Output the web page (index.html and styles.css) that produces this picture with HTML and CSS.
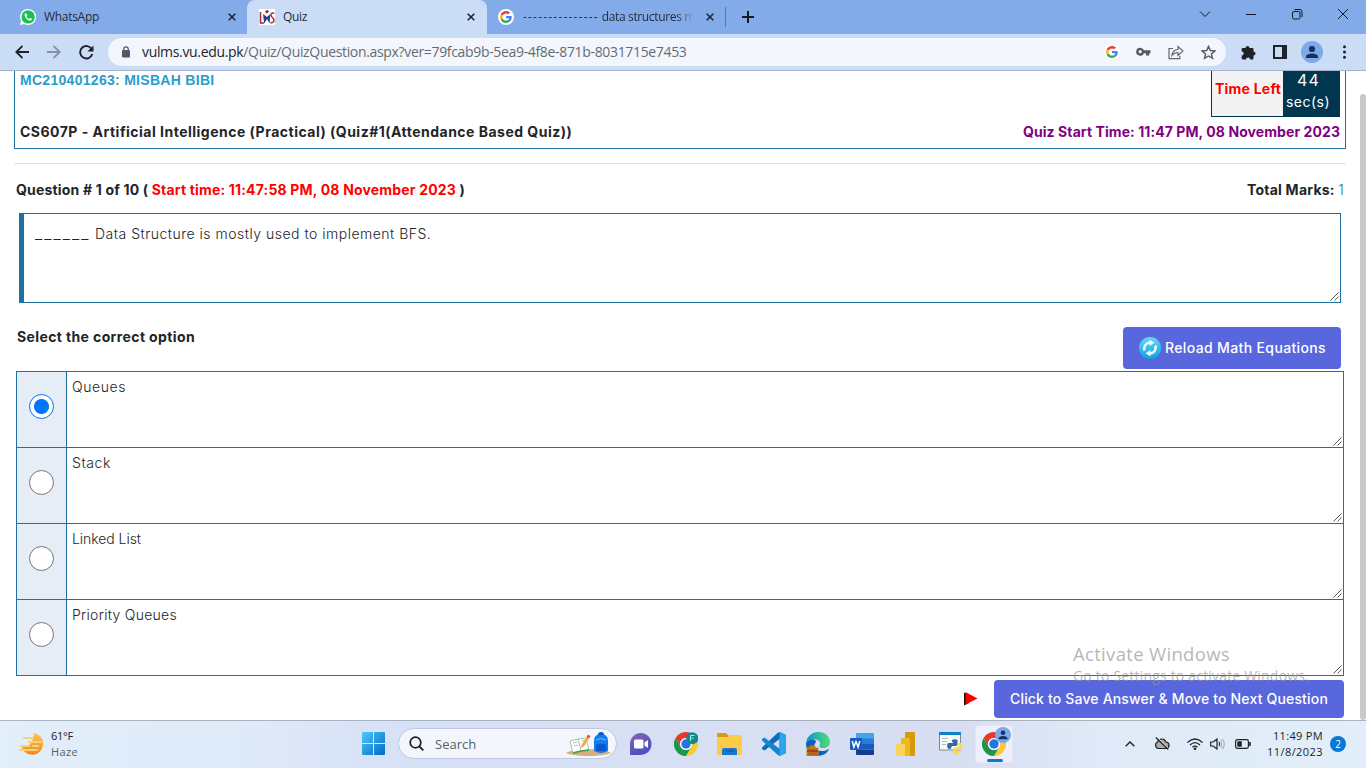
FILE: index.html
```html
<!DOCTYPE html>
<html lang="en">
<head>
<meta charset="utf-8">
<title>Quiz</title>
<link rel="stylesheet" href="styles.css">
</head>
<body>
<svg class="defs" width="0" height="0">
  <symbol id="chrome" viewBox="0 0 24 24"><path fill="#e33b2e" d="M1.6 6A12 12 0 0 1 22.4 6H12A6 6 0 0 0 6.8 15Z"/><path fill="#fcc934" d="M22.4 6A12 12 0 0 1 12 24L17.2 15A6 6 0 0 0 12 6Z"/><path fill="#1e9648" d="M12 24A12 12 0 0 1 1.6 6L6.8 15A6 6 0 0 0 17.2 15Z"/><circle cx="12" cy="12" r="5.9" fill="#fff"/><circle cx="12" cy="12" r="4.7" fill="#2474e8"/></symbol>
  <symbol id="google" viewBox="0 0 48 48"><path fill="#EA4335" d="M24 9.5c3.54 0 6.71 1.22 9.21 3.6l6.85-6.85C35.9 2.38 30.47 0 24 0 14.62 0 6.51 5.38 2.56 13.22l7.98 6.19C12.43 13.72 17.74 9.5 24 9.5z"/><path fill="#4285F4" d="M46.98 24.55c0-1.57-.15-3.09-.38-4.55H24v9.02h12.94c-.58 2.96-2.26 5.48-4.78 7.18l7.73 6c4.51-4.18 7.09-10.36 7.09-17.65z"/><path fill="#FBBC05" d="M10.53 28.59c-.48-1.45-.76-2.99-.76-4.59s.27-3.14.76-4.59l-7.98-6.19C.92 16.46 0 20.12 0 24c0 3.88.92 7.54 2.56 10.78l7.97-6.19z"/><path fill="#34A853" d="M24 48c6.48 0 11.93-2.13 15.89-5.81l-7.73-6c-2.15 1.45-4.92 2.3-8.16 2.3-6.26 0-11.57-4.22-13.47-9.91l-7.98 6.19C6.51 42.62 14.62 48 24 48z"/></symbol>
  <symbol id="close" viewBox="0 0 8 8"><path d="M.7.7 7.3 7.3M7.3.7.7 7.3" stroke="#1f2530" stroke-width="1.6"/></symbol>
  <symbol id="person" viewBox="0 0 22 22"><circle cx="11" cy="11" r="11" fill="#7fa8e8"/><circle cx="11" cy="8" r="3.1" fill="#123261"/><path d="M5 17v-1.6c0-2 3.6-3 6-3s6 1 6 3V17z" fill="#123261"/></symbol>
</svg>

<header class="tabstrip">
  <div class="tab tab-first">
    <svg class="favicon" viewBox="0 0 16 16"><path d="M0 16 1.1 11.9A8 8 0 1 1 4.200 15z" fill="#fff"/><circle cx="8.100" cy="7.900" r="6.700" fill="#19c14f"/><path d="M5.500 4.200c-1.600 1-.8 3.400.8 5.200 1.700 1.900 4.300 3 5.400 1.400.5-.8 0-1.100-1.400-1.700-.6-.2-.9.900-1.300.8-1-.3-2-1.300-2.300-2.200-.1-.4.8-.7.600-1.200-.5-1.500-.9-2.600-1.800-2.300z" fill="#fff"/></svg>
    <span class="tab-title t-wa">WhatsApp</span>
    <svg class="x" width="8" height="8"><use href="#close"/></svg>
  </div>
  <div class="tab tab-active">
    <svg class="favicon" viewBox="0 0 16 16"><path d="M0 0h16v16H0z" fill="#fff"/><path d="M1.500 3v11H5" stroke="#a52a2a" stroke-width="1.500" fill="none"/><path d="M15.300 4.500c-3-2-4.300 1.500-2.300 3.500 3 2.500 2.500 6.500-1.500 5.500" stroke="#a52a2a" stroke-width="1.500" fill="none"/><path d="M4 5 5.200 14.500 8 10l2.500 4.500L11.300 5 8 8z" fill="#2a3b8c"/><circle cx="8" cy="2.600" r="1.700" fill="#b02a35"/></svg>
    <span class="tab-title t-quiz">Quiz</span>
    <svg class="x" width="8" height="8"><use href="#close"/></svg>
  </div>
  <div class="tab tab-last">
    <span class="g-disc"><svg width="12" height="12"><use href="#google"/></svg></span>
    <span class="tab-title tab-fade"><span class="dashes">---------------</span> data structures m</span>
    <svg class="x" width="8" height="8"><use href="#close"/></svg>
  </div>
  <span class="tab-divider"></span>
  <svg class="plus" width="12" height="12" viewBox="0 0 12 12"><path d="M6 0v12M0 6h12" stroke="#16191f" stroke-width="2"/></svg>
  <div class="win-buttons">
    <svg width="12" height="12" viewBox="0 0 12 12"><path d="m1 3.500 5 5 5-5" /></svg>
    <svg width="12" height="12" viewBox="0 0 12 12"><path d="M1 6.500h10"/></svg>
    <svg width="12" height="12" viewBox="0 0 12 12"><rect x="1.500" y="3.500" width="7.500" height="7.500" rx="1.500"/><path d="M3.500 1.500H9a2 2 0 0 1 2 2V9"/></svg>
    <svg width="12" height="12" viewBox="0 0 12 12"><path d="m1 1 10 10M11 1 1 11"/></svg>
  </div>
</header>

<nav class="toolbar">
  <svg class="nav-icon" width="14" height="14" viewBox="0 0 14 14"><path d="M14 7H1.500M7.500.8 1.300 7l6.200 6.200" stroke="#1f2329" stroke-width="1.900" fill="none"/></svg>
  <svg class="nav-icon" width="14" height="14" viewBox="0 0 14 14"><path d="M0 7h12.500M6.500.8 12.700 7l-6.200 6.200" stroke="#8791a4" stroke-width="1.900" fill="none"/></svg>
  <svg class="nav-icon" width="15" height="15" viewBox="0 0 15 15"><path d="M12.800 4.300A6.200 6.200 0 1 0 13.300 9" stroke="#1f2329" stroke-width="1.900" fill="none"/><path d="M14.500.5v6H8.500z" fill="#1f2329"/></svg>
  <div class="omnibox">
    <svg width="8" height="12" viewBox="0 0 8 12"><rect y="4" width="8" height="7.500" rx="1" fill="#55595f"/><path d="M1.800 5V3a2.200 2.200 0 0 1 4.400 0v2" fill="none" stroke="#55595f" stroke-width="1.200"/></svg>
    <span class="url"><span class="host">vulms.vu.edu.pk</span>/Quiz/QuizQuestion.aspx?ver=79fcab9b-5ea9-4f8e-871b-8031715e7453</span>
    <div class="omni-actions">
      <span class="g-disc"><svg width="12" height="12"><use href="#google"/></svg></span>
      <svg width="15" height="10" viewBox="0 0 15 10"><path fill="#55595f" fill-rule="evenodd" d="M4.200.7a4 4 0 1 0 3.700 5.500H10V8.500h3.200V6.200H14.500V3.300H7.900A4 4 0 0 0 4.200.7zm0 2.400a1.600 1.600 0 1 1 0 3.200 1.600 1.600 0 0 1 0-3.200z"/></svg>
      <svg width="16" height="15" viewBox="0 0 16 15" fill="none" stroke="#62676e" stroke-width="1.200"><path d="M5 3.500H1v10.200h10.800v-3"/><path d="M4 10.500C4.300 7 6.500 4.700 10 4.500V1.500L15 6l-5 4.500v-3C7.500 7.500 5.500 8.500 4 10.500z"/></svg>
      <svg width="15" height="15" viewBox="0 0 15 15"><path d="m7.500 1.300 1.800 4.200 4.600.4-3.500 3 1.100 4.500-4-2.400-4 2.400 1.100-4.500-3.500-3 4.600-.4z" fill="none" stroke="#55595f" stroke-width="1.400"/></svg>
    </div>
  </div>
  <div class="tool-actions">
    <svg width="15" height="15" viewBox="0 0 15 15"><path fill="#1f2329" d="M4.500 3a2 2 0 0 1 4 0h2.800a1.200 1.200 0 0 1 1.200 1.200v2.300a2 2 0 0 1 0 4v2.800c0 .8-.5 1.200-1.200 1.200H9.200a2 2 0 0 0-4.200 0H1.900C1.100 14.500.7 14 .7 13.300v-2.700a2 2 0 0 0 0-4V4.200C.7 3.500 1.100 3 1.900 3z"/></svg>
    <svg width="14" height="14" viewBox="0 0 14 14"><path d="M1 1h12v12H1z" fill="none" stroke="#1f2329" stroke-width="2"/><path d="M9 0h5v14H9z" fill="#1f2329"/></svg>
    <svg width="22" height="22"><use href="#person"/></svg>
    <svg class="kebab" width="3" height="14" viewBox="0 0 3 14" fill="#1f2329"><circle cx="1.500" cy="1.800" r="1.500"/><circle cx="1.500" cy="7" r="1.500"/><circle cx="1.500" cy="12.200" r="1.500"/></svg>
  </div>
</nav>

<main class="page">
  <section class="quiz-head">
    <div class="head-top">
      <span class="student">MC210401263: MISBAH BIBI</span>
      <div class="timer">
        <span class="timer-label">Time Left</span>
        <span class="timer-value"><span class="seconds">44</span><span class="unit">sec(s)</span></span>
      </div>
    </div>
    <div class="head-bottom">
      <span class="course">CS607P - Artificial Intelligence (Practical) (Quiz#1(Attendance Based Quiz))</span>
      <span class="started">Quiz Start Time: 11:47 PM, 08 November 2023</span>
    </div>
  </section>
  <hr class="rule">
  <div class="question-bar">
    <span class="q-number">Question # 1 of 10 ( <span class="red">Start time: 11:47:58 PM, 08 November 2023</span> )</span>
    <span class="total">Total Marks: <span class="marks">1</span></span>
  </div>
  <div class="question-box"><span class="q-text"><span class="blank">______</span> Data Structure is mostly used to implement BFS.</span><svg class="grip" viewBox="0 0 9 9"><path d="M.5 8.500l8-8M4.500 8.500l4-4"/></svg></div>
  <div class="select-bar">
    <span class="select-title">Select the correct option</span>
    <button class="btn reload">
      <svg width="22" height="22" viewBox="0 0 22 22"><defs><linearGradient id="rg" x2="0" y2="1"><stop stop-color="#68d8f5"/><stop offset="1" stop-color="#08a5df"/></linearGradient></defs><circle cx="11" cy="11" r="11" fill="url(#rg)"/><path d="M5.600 13.500A6 6 0 0 1 11 5.500M16.400 8.500A6 6 0 0 1 11 16.500" fill="none" stroke="#eefaff" stroke-width="2.600"/><path d="m10.500 2.500 5 3.300-5 3.200zM11.500 19.500l-5-3.300 5-3.200z" fill="#eefaff"/></svg>
      <span>Reload Math Equations</span>
    </button>
  </div>
  <div class="options">
    <div class="option"><span class="pick"><span class="radio checked"></span></span><div class="answer"><span class="t-o1">Queues</span><svg class="grip" viewBox="0 0 9 9"><path d="M.5 8.500l8-8M4.500 8.500l4-4"/></svg></div></div>
    <div class="option"><span class="pick"><span class="radio"></span></span><div class="answer"><span class="t-o2">Stack</span><svg class="grip" viewBox="0 0 9 9"><path d="M.5 8.500l8-8M4.500 8.500l4-4"/></svg></div></div>
    <div class="option"><span class="pick"><span class="radio"></span></span><div class="answer"><span class="t-o3">Linked List</span><svg class="grip" viewBox="0 0 9 9"><path d="M.5 8.500l8-8M4.500 8.500l4-4"/></svg></div></div>
    <div class="option"><span class="pick"><span class="radio"></span></span><div class="answer"><span class="t-o4">Priority Queues</span><svg class="grip" viewBox="0 0 9 9"><path d="M.5 8.500l8-8M4.500 8.500l4-4"/></svg></div></div>
  </div>
  <div class="submit-bar">
    <svg width="14" height="14" viewBox="0 0 14 14"><path d="M0 .5v13L5 11V3z" fill="#111"/><path d="M1.500 0v12.500L13.500 6.500z" fill="#f00"/></svg>
    <button class="btn save"><span>Click to Save Answer &amp; Move to Next Question</span></button>
  </div>
  <span class="scroll-thumb"></span>
  <div class="watermark"><span class="wm-1">Activate Windows</span><span class="wm-2">Go to Settings to activate Windows.</span></div>
</main>

<footer class="taskbar">
  <div class="weather">
    <svg width="24" height="24" viewBox="0 0 24 24"><defs><linearGradient id="sun" x2="0" y2="1"><stop stop-color="#ffc34a"/><stop offset="1" stop-color="#f5861f"/></linearGradient></defs><path d="M15 1a11 11 0 1 1-12.500 14C8 16 14 13 15 1z" fill="url(#sun)"/><path d="M4 6h10M9 10h14M1 14h10M13 14h7M0 18h19" stroke="#f3d27c" stroke-width="2"/></svg>
    <div class="stack"><span class="temp">61°F</span><span class="dim">Haze</span></div>
  </div>
  <div class="apps">
    <svg class="start" width="23" height="23" viewBox="0 0 23 23"><defs><linearGradient id="win" x2="1" y2="1"><stop stop-color="#4ccaf8"/><stop offset="1" stop-color="#0469c9"/></linearGradient></defs><path fill="url(#win)" d="M0 1q0-1 1-1h10v11H0zM12 0h10q1 0 1 1v10H12zM0 12h11v11H1q-1 0-1-1zM12 12h11v10q0 1-1 1H12z"/></svg>
    <div class="search">
      <svg width="15" height="15" viewBox="0 0 15 15"><circle cx="6.500" cy="6.500" r="5.300" fill="none" stroke="#1d1d1f" stroke-width="1.700"/><path d="m10.300 10.300 4 4" stroke="#1d1d1f" stroke-width="1.900"/></svg>
      <span class="search-text">Search</span>
      <svg class="doodle" width="45" height="24" viewBox="0 0 45 24"><path d="M0 21c9-5 36-5 45 0-8 4-37 4-45 0z" fill="#d9ad7b"/><path d="m4 9 8-2 8-1 3 12-8 1-8 2z" fill="#fff" stroke="#8db59a" stroke-width=".8"/><path d="m7 21 8-2 8-1" stroke="#3f9c4a" stroke-width="1.600" fill="none"/><path d="m12 7 3 12M7 11l4-1m-3 4 4-1m4-4 3-.500m-2 4 3-.500" stroke="#a6b4b2" stroke-width=".9"/><path d="m15 14 5.500-9 2.500 1.600-5.500 8.200-2.500 1z" fill="#f5a742"/><path d="m20.500 5 1.500-2.500 2.500 1.600L23 6.600z" fill="#e64d44"/><path d="M28 19V9q0-7 7-7t7 7v10q-7 4-14 0z" fill="#137bed"/><path d="M32 3q0-3 3-3t3 3M30 12h10v7H30z" fill="#0757cd"/><path d="M30 8q5-3 10 0" stroke="#66bdff" fill="none"/></svg>
    </div>
    <svg class="a-chat" width="24" height="24" viewBox="0 0 24 24"><defs><linearGradient id="chat" x2=".5" y2="1"><stop stop-color="#8a63b0"/><stop offset="1" stop-color="#4b50c4"/></linearGradient></defs><path fill="url(#chat)" d="M12 1a11 11 0 1 1-1 22H1V12A11 11 0 0 1 12 1z"/><rect x="5" y="7.500" width="9.500" height="9" rx="1.500" fill="#fff"/><path d="m15.500 10.500 3.500-2.500v8l-3.500-2.500z" fill="#fff"/></svg>
    <svg class="a-chrome" width="24" height="24" viewBox="0 0 24 24"><use href="#chrome"/><circle cx="18.300" cy="6.200" r="6" fill="#0c8c8c"/><path d="M16.500 9V3.500h4M16.500 6.200h3" stroke="#b8e4e2" fill="none"/></svg>
    <svg class="a-files" width="25" height="22" viewBox="0 0 25 22"><path d="M0 1q0-1 1-1h8l3 3h11v8H0z" fill="#d89a13"/><path d="M0 4h11l2-2h11q1 0 1 1v19H0z" fill="#fccb4a"/><path d="M5 22v-5q0-2 2-2h11q2 0 2 2v5z" fill="#1677ce"/><path d="M9 18h8" stroke="#0b4f91"/></svg>
    <svg class="a-code" width="24" height="24" viewBox="0 0 24 24"><path fill="#0870b8" fill-rule="evenodd" d="M17.500 0 24 3v18l-6.500 3L7.500 14.800 2.500 18.500 0 17V15.500L15.500 1zM17.500 7v10L11 12z"/><path d="M17.500 7 11 12l-3.500 2.800L0 8.500V7l2.500-1.500z" fill="none"/><path d="M2.500 5.500 0 7v1.500l14.500 13.200 3 2.300V17z" fill="#1685d1"/><path d="M17.500 0v24l6.500-3V3z" fill="#2aa5ee"/></svg>
    <svg class="a-edge" width="24" height="24" viewBox="0 0 24 24"><defs><linearGradient id="edge"><stop stop-color="#1890da"/><stop offset="1" stop-color="#4de06e"/></linearGradient></defs><path d="M12 0c8 0 12 5 12 10 0 4-3 6-7 6-4 0-4-2-3-4 1-4-7-7-14-1C1 4 6 0 12 0z" fill="url(#edge)"/><path d="M0 11C4 6 10 7 10 10c-4 4 0 10 7 9 3 0 5-2 6-2-2 5-7 7-12 7C4 24 0 18 0 11z" fill="#1260b5"/><path d="M1 16h11v8H1zM4 16v-2h5v2" fill="#b66518" stroke="#d08528"/><path d="M1 19h11" stroke="#653710"/></svg>
    <svg class="a-word" width="24" height="22" viewBox="0 0 24 22"><path d="M6 1q0-1 1-1h16q1 0 1 1v5H6z" fill="#41a5ee"/><path d="M6 5.500h18V11H6z" fill="#2b7cd3"/><path d="M6 11h18v5.500H6z" fill="#185abd"/><path d="M6 16.500h18V21q0 1-1 1H7q-1 0-1-1z" fill="#103f91"/><rect y="5" width="12" height="12" rx="1" fill="#185abd"/><path d="m2.200 8 1.700 6L6 8.500 8.100 14l1.700-6" stroke="#fff" stroke-width="1.500" fill="none"/></svg>
    <svg class="a-bi" width="20" height="24" viewBox="0 0 20 24"><path d="M9 1q0-1 1-1h8q1 0 1 1v22q0 1-1 1H9z" fill="#d49a0c"/><path d="M5 7q0-1 1-1h7q1 0 1 1v17H5z" fill="#edb91f"/><path d="M0 13q0-1 1-1h7q1 0 1 1v11H1q-1 0-1-1z" fill="#fbd25c"/></svg>
    <svg class="a-py" width="23" height="23" viewBox="0 0 23 23"><path d="M.5 1.500h21V18H.5z" fill="#f5f7f8" stroke="#7c8995"/><path d="M0 0h22v3H0z" fill="#1180ca"/><path d="M3 6.500h6M3 9.500h5M3 12.500h4" stroke="#b3bbc0"/><path d="M13 8q3-1.500 5.500 0v5l-1 1H13l-1.500 3H9.500q-2.500-3-.5-6h5v-1h-1z" fill="#2f6d9e"/><path d="M19.500 11H22q2.500 4-.5 7H17v.8h3V21q-3 2.500-6 .5V17l1-1.500h3.500l1-1.500z" fill="#fad849"/></svg>
    <div class="active-app"><svg width="26" height="26" viewBox="0 0 26 26"><use href="#chrome" y="2" width="24" height="24"/></svg><svg class="badge" width="16" height="16" viewBox="0 0 22 22"><use href="#person"/></svg></div>
  </div>
  <div class="tray">
    <svg width="10" height="6" viewBox="0 0 10 6"><path d="m.7 5.300 4.300-4.300 4.300 4.300" fill="none" stroke="#222" stroke-width="1.400"/></svg>
    <svg class="y-cloud" width="16" height="13" viewBox="0 0 16 13"><path d="M4 11.500a3.500 3.500 0 0 1-.5-6.500 4.500 4.500 0 0 1 8.500 0 3.300 3.300 0 0 1 .5 6.500z" fill="#aaa" stroke="#222" stroke-width="1.200"/><path d="m3 .5 12 12" stroke="#e4eefa" stroke-width="1.200"/><path d="m1.800.5 12.500 12" stroke="#222" stroke-width="1.300"/></svg>
    <svg class="y-wifi" width="16" height="12" viewBox="0 0 16 12" fill="none" stroke="#222" stroke-width="1.200"><path d="M.5 4.500q7.500-7 15 0M3 7q5-4.700 10 0M5.500 9.300q2.500-2.200 5 0"/><circle cx="8" cy="10.800" r=".7" fill="#222"/></svg>
    <svg class="y-vol" width="15" height="12" viewBox="0 0 15 12" fill="none" stroke="#222" stroke-width="1.200"><path d="M.7 4v4h2.500L7 11V1L3.200 4z"/><path d="M9 4q1.300 2 0 4"/><path d="M10.500 2.300q2.500 3.700 0 7.400M12.300.8q4 5.200 0 10.400" stroke="#aab2bb"/></svg>
    <svg class="y-bat" width="16" height="10" viewBox="0 0 16 10"><rect x=".6" y=".6" width="12.800" height="8.800" rx="1.800" fill="none" stroke="#222" stroke-width="1.200"/><path d="M2.300 2.300h4.500v5.400H2.300z" fill="#222"/><path d="M15 3v4" stroke="#222" stroke-width="1.600"/></svg>
    <div class="clock"><span class="time">11:49 PM</span><span class="date">11/8/2023</span></div>
    <span class="notice">2</span>
  </div>
</footer>
</body>
</html>
```
FILE: styles.css
```css
* { box-sizing: border-box; }
html, body { margin: 0; width: 1366px; height: 768px; overflow: hidden; }
body { display: flex; flex-direction: column; font-family: Inter, "Open Sans", sans-serif; font-size: 14px; color: #212529; background: #fff; }
svg { display: block; flex: none; }
span { white-space: nowrap; }
.defs { position: absolute; }

/* Browser tabs */
.tabstrip { height: 34px; flex: none; display: flex; align-items: center; background: #84abe9; font: 12px "Open Sans", "Noto Sans", sans-serif; color: #262c38; }
.tab { height: 34px; display: flex; align-items: center; flex: none; }
.tab-first { width: 247px; padding: 0 11px 0 20px; }
.tab-active { width: 240px; padding: 0 12px; background: #cbdcf6; border-radius: 8px 8px 0 0; }
.tab-last { width: 238px; padding: 0 11px 0 11px; }
.favicon { width: 16px; height: 16px; margin-right: 8px; }
.tab-title { margin-right: auto; line-height: 16px; }
.t-wa { letter-spacing: -.297px; }
.t-quiz { letter-spacing: -.34px; }
.tab-fade { width: 171px; overflow: hidden; letter-spacing: -.35px; -webkit-mask-image: linear-gradient(90deg, #000 90%, transparent); mask-image: linear-gradient(90deg, #000 90%, transparent); }
.dashes { letter-spacing: 1.200px; }
.tab-last .g-disc { margin-right: 9px; }
.g-disc { width: 16px; height: 16px; border-radius: 50%; background: #fff; display: flex; align-items: center; justify-content: center; flex: none; }
.x { width: 8px; height: 8px; }
.tab-divider { width: 1px; height: 20px; background: #5878a8; }
.plus { margin-left: 16px; }
.win-buttons { margin: -6px 17px 0 auto; display: flex; gap: 34px; fill: none; stroke: #14181f; stroke-width: 1; }

/* Address bar */
.toolbar { height: 37px; flex: none; display: flex; align-items: center; padding: 0 20px 0 15px; background: #cbdcf6; border-bottom: 1px solid #a6b3cb; }
.nav-icon { margin-right: 18px; }
.nav-icon:nth-child(3) { margin-right: 14px; }
.omnibox { width: 1118px; height: 28px; border-radius: 14px; background: #f3f7fd; display: flex; align-items: center; padding: 0 10px 0 14px; flex: none; font: 14px "Open Sans", "Noto Sans", sans-serif; color: #666b72; }
.url { margin: -1px 0 0 12px; letter-spacing: -.335px; }
.host { color: #1f2329; }
.omni-actions { margin-left: auto; display: flex; align-items: center; gap: 17px; }
.omni-actions .g-disc { margin-right: -1px; }
.tool-actions { margin-left: auto; display: flex; align-items: center; gap: 15px; }
.tool-actions svg:nth-child(2) { margin-left: 2px; margin-right: -1px; }
.tool-actions .kebab { margin-left: 5px; }

/* Quiz page */
.page { position: relative; flex: 1; padding: 0 20px 0 14px; overflow: hidden; }
.quiz-head { height: 78px; border: 1px solid #1f72a0; border-top: 0; padding: 0 5px; display: flex; flex-direction: column; }
.head-top { height: 46px; display: flex; justify-content: space-between; }
.student { font: bold 14px/18px "Liberation Sans", Arial, sans-serif; color: #2b9dcc; letter-spacing: .29px; }
.timer { display: flex; width: 129px; height: 46px; border: 1px solid #003650; border-top: 0; }
.timer-label { width: 71px; background: #f3f3f3; color: #f00; font-weight: 700; padding: 9px 0 0 3px; line-height: 18px; letter-spacing: .224px; }
.timer-value { flex: 1; background: #003650; color: #fff; display: flex; flex-direction: column; align-items: flex-start; padding-left: 3px; }
.seconds { font-size: 16px; line-height: 18px; margin: 0 0 2px 11px; letter-spacing: 1.100px; }
.unit { line-height: 22px; letter-spacing: .474px; }
.head-bottom { display: flex; justify-content: space-between; font-weight: 700; line-height: 30px; }
.course { letter-spacing: .49px; }
.started { color: #800080; letter-spacing: .078px; }
.rule { height: 1px; border: 0; background: #e1e1e1; margin: 14px 0 0; }
.question-bar { height: 49px; display: flex; justify-content: space-between; padding: 0 2px; font-weight: 700; line-height: 52px; }
.q-number { letter-spacing: .18px; }
.total { letter-spacing: .225px; }
.red { color: #f00; }
.marks { color: #2573a0; font-weight: 300; }
.question-box { position: relative; height: 90px; margin: 0 5px; border: 1px solid #1f72a0; border-left-width: 5px; padding: 11px; font-weight: 300; line-height: 18px; }
.q-text { letter-spacing: .5px; }
.blank { font-size: 16px; line-height: 16px; letter-spacing: 2.100px; }
.grip { position: absolute; right: 1px; bottom: 1px; width: 9px; height: 9px; fill: none; stroke: #444; stroke-width: .9; }
.select-bar { height: 68px; display: flex; justify-content: space-between; align-items: flex-end; padding: 0 5px 2px 3px; font-weight: 700; }
.select-title { line-height: 18px; margin-bottom: 23px; letter-spacing: .38px; }
.btn { border: 0; border-radius: 4px; background: #5867dd; color: #fff; font: 500 14px Inter, sans-serif; display: flex; align-items: center; padding: 0 16px; }
.btn span { margin-top: -2px; }
.reload { width: 218px; height: 42px; gap: 4px; padding: 0 15px 0 16px; letter-spacing: .362px; }
.options { margin: 0 2px; border: 1px solid #1f72a0; border-bottom: 0; }
.option { display: flex; height: 76px; border-bottom: 1px solid #1f72a0; }
.pick { width: 50px; background: #e6edf7; border-right: 1px solid #1f72a0; display: flex; justify-content: center; padding-top: 22px; }
.radio { width: 25px; height: 25px; border-radius: 50%; border: 1px solid #767676; background: #fff; }
.radio.checked { border-color: #0075ff; background: radial-gradient(circle, #0075ff 7px, #fff 8px); }
.answer { position: relative; flex: 1; padding: 6px 5px; font-weight: 300; line-height: 18px; }
.t-o1 { letter-spacing: .57px; }
.t-o2 { letter-spacing: .594px; }
.t-o3 { letter-spacing: -.05px; }
.t-o4 { letter-spacing: .284px; }
.submit-bar { height: 42px; display: flex; justify-content: flex-end; align-items: center; gap: 16px; padding: 4px 2px 0 0; }
.save { width: 350px; height: 38px; letter-spacing: .17px; }
.scroll-thumb { position: absolute; right: 0; top: 23px; width: 6px; height: 626px; border-radius: 3px; background: #c9c9c9; }
.watermark { position: absolute; left: 1073px; top: 571px; display: flex; flex-direction: column; align-items: flex-start; color: rgba(150,150,150,.7); font-family: "Open Sans", sans-serif; }
.wm-1 { font-size: 18.500px; line-height: 24px; letter-spacing: .322px; }
.wm-2 { font-size: 14px; line-height: 20px; letter-spacing: .189px; }

/* Taskbar */
.taskbar { height: 48px; flex: none; border-top: 1px solid #a9b3bf; padding-bottom: 2px; background: linear-gradient(90deg, #e2eefa 0, #dfeaf9 18%, #d6e0f7 30%, #d8dff3 55%, #d7def1 70%, #dfe9f7 80%, #e2eefa 100%); display: flex; align-items: center; font-family: "Open Sans", sans-serif; font-size: 11px; color: #1e2126; }
.weather { width: 361px; padding-left: 19px; display: flex; gap: 8px; align-items: center; }
.stack { display: flex; flex-direction: column; align-items: flex-start; line-height: 16px; }
.temp { letter-spacing: -.242px; }
.dim { color: #5a6068; letter-spacing: .359px; }
.apps { display: flex; align-items: center; height: 45px; }
.start { margin: 0 13px 0 1px; }
.search { width: 219px; height: 31px; border: 1px solid #bdc9df; border-radius: 16px; background: #f3f6fd; display: flex; align-items: center; padding: 0 5px 0 10px; font-size: 13px; color: #5b5f66; }
.search-text { margin-left: 11px; }
.doodle { margin-left: auto; }
.a-chat { margin-left: 12px; }
.a-chrome, .a-edge { margin-left: 20px; }
.a-chrome { margin-left: 21px; }
.a-files { margin-left: 19px; }
.a-code { margin-left: 20px; }
.a-word { margin-left: 20px; }
.a-bi { margin-left: 22px; }
.a-py { margin-left: 23px; }
.active-app { position: relative; margin-left: 13px; width: 38px; height: 38px; border-radius: 4px; background: #edf0fa; display: flex; justify-content: center; padding: 4px 0 0 1px; border: 1px solid #e4e8f4; }
.active-app::after { content: ""; position: absolute; bottom: 0; left: 11px; width: 16px; height: 3px; border-radius: 2px; background: #0a78d4; }
.badge { position: absolute; right: 1px; top: 1px; }
.tray { margin-left: auto; display: flex; align-items: center; padding-right: 20px; }
.y-cloud { margin-left: 19px; }
.y-wifi { margin-left: 17px; }
.y-vol { margin-left: 7px; }
.y-bat { margin-left: 10px; }
.clock { display: flex; flex-direction: column; align-items: flex-end; width: 72px; line-height: 16px; }
.time { letter-spacing: .322px; }
.date { letter-spacing: .432px; }
.notice { width: 16px; height: 16px; margin-left: 7px; border-radius: 50%; background: #0878d4; color: #fff; font-size: 10px; line-height: 16px; text-align: center; }
```
